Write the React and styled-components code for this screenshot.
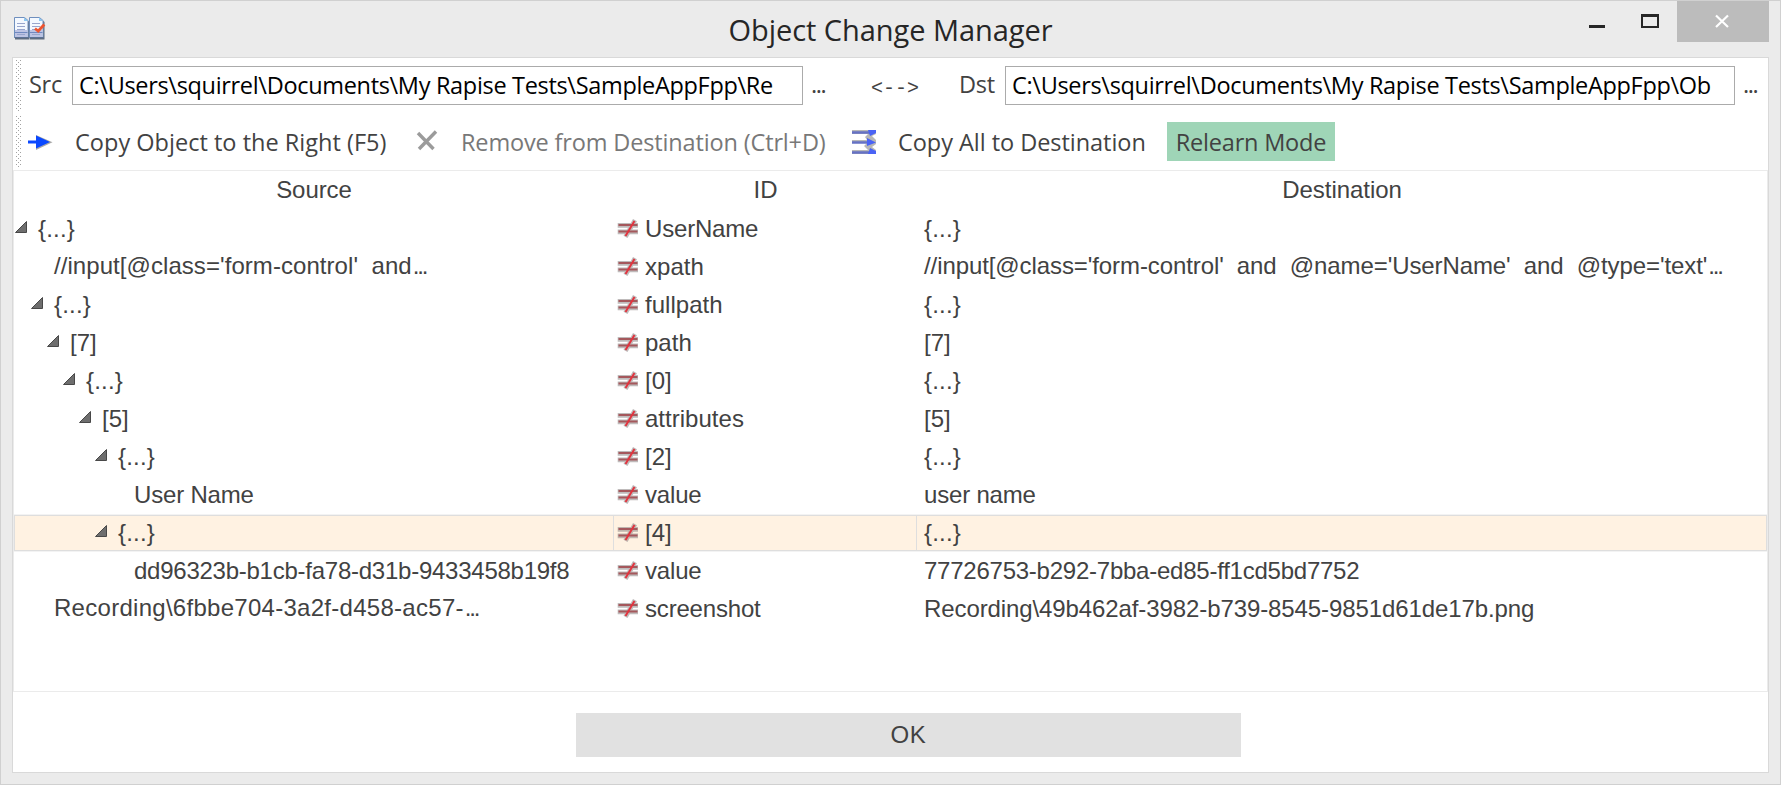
import React from 'react';
import styled, { createGlobalStyle } from 'styled-components';

const Global = createGlobalStyle`
  * { box-sizing: border-box; }
  body { margin: 0; background: #ebebeb; }
`;

const Window = styled.div`
  width: 1781px;
  height: 785px;
  display: flex;
  flex-direction: column;
  padding: 0 11px 11px;
  border: 1px solid #d0d0d0;
  background: #ebebeb;
  color: #424242;
  font-family: 'Open Sans', 'Noto Sans', sans-serif;
  font-size: 23.5px;
  white-space: pre;
`;

const TitleBar = styled.header`
  height: 56px;
  flex: none;
  display: grid;
  grid-template-columns: 280px 1fr 280px;
`;

const AppIcon = styled.svg`
  display: block;
  margin: 15px 0 0 2px;
`;

const Title = styled.h1`
  margin: 0;
  font-size: 29px;
  font-weight: 400;
  line-height: 58px;
  letter-spacing: -0.06px;
  text-align: center;
  color: #262626;
`;

const WindowButtons = styled.div`
  display: flex;
  justify-content: flex-end;
  align-items: flex-start;
`;

const WindowButton = styled.button`
  width: ${(p) => p.$width}px;
  height: 41px;
  padding: 0;
  border: 0;
  background: ${(p) => (p.$close ? '#bcbcbc' : 'transparent')};
  svg { display: block; }
`;

const Panel = styled.main`
  flex: 1;
  display: flex;
  flex-direction: column;
  border: 1px solid #d9d9d9;
  background: #fff;
`;

const Toolbar = styled.div`
  height: 56px;
  flex: none;
  display: flex;
  align-items: flex-start;
  padding: 2px 0 0 3px;
`;

const Grip = styled.svg`
  flex: none;
  width: 5px;
  height: 51px;
`;

const PathLabel = styled.label`
  width: ${(p) => p.$width}px;
  padding-top: 5px;
  padding-left: ${(p) => p.$left}px;
  line-height: 39px;
  letter-spacing: -0.3px;
`;

const PathInput = styled.div`
  width: ${(p) => p.$width}px;
  height: 39px;
  margin-top: 6px;
  padding-left: 6px;
  border: 1px solid #ababab;
  color: #000;
  line-height: 37px;
  letter-spacing: -0.32px;
  overflow: hidden;
`;

const BrowseButton = styled.button`
  width: ${(p) => p.$width}px;
  margin-top: 5px;
  padding: 0 0 0 8px;
  border: 0;
  background: none;
  color: inherit;
  font: inherit;
  text-align: left;
  line-height: 39px;
  letter-spacing: -1.4px;
`;

const SwapButton = styled(BrowseButton)`
  margin-top: 9px;
  padding-left: 7px;
  font: 20px 'Liberation Mono', monospace;
  line-height: 40px;
  letter-spacing: 0;
`;

const Command = styled.button`
  display: flex;
  width: ${(p) => p.$width}px;
  height: 39px;
  margin-top: 6px;
  padding: 0;
  border: 0;
  background: none;
  color: ${(p) => (p.$disabled ? '#787878' : 'inherit')};
  font: inherit;
  line-height: 40px;
  letter-spacing: ${(p) => p.$track || 0}px;
  svg { flex: none; }
`;

const ModeButton = styled.button`
  width: 168px;
  height: 39px;
  margin-top: 6px;
  padding: 0;
  border: 0;
  background: #9fd5b7;
  color: inherit;
  font: inherit;
  line-height: 38px;
  letter-spacing: -0.2px;
`;

const Table = styled.section`
  height: 522px;
  flex: none;
  border: 1px solid #ebebeb;
  font-family: 'Liberation Sans', Arial, sans-serif;
  font-size: 24px;
  letter-spacing: -0.2px;
`;

const HeaderRow = styled.div`
  display: grid;
  grid-template-columns: 600px 303px 1fr;
  height: 39px;
  line-height: 38px;
  text-align: center;
  letter-spacing: -0.05px;
`;

const Row = styled.div`
  display: grid;
  grid-template-columns: 600px 303px 1fr;
  height: 38px;
  ${(p) => p.$selected && `
    padding: 1px 0;
    background: #f3f3f3;
  `}
`;

const Cell = styled.div`
  display: flex;
  min-width: 0;
  line-height: ${(p) => (p.$raised ? 36 : p.$selected ? 34 : 38)}px;
  padding-left: ${(p) => p.$left - (p.$selected && p.$first ? 1 : 0)}px;
  letter-spacing: ${(p) => p.$track}px;
  ${(p) => p.$selected && `
    background: #fff2e2;
    border: 1px solid #dedede;
    border-left-width: ${p.$first ? 1 : 0}px;
  `}
`;

const Dots = styled.span`
  margin-left: 1px;
  letter-spacing: -2.2px;
`;

const Footer = styled.footer`
  flex: 1;
  display: flex;
  justify-content: flex-start;
  padding: 21px 0 0 563px;
`;

const OkButton = styled.button`
  width: 665px;
  height: 44px;
  padding: 0;
  border: 0;
  background: #e1e1e1;
  color: inherit;
  font: 24px/42px 'Liberation Sans', Arial, sans-serif;
  letter-spacing: 0.6px;
`;

const ToggleSvg = styled.svg`
  flex: none;
  margin: ${(p) => (p.$selected ? 9 : 11)}px 11px 0 0;
`;

const NotEqualSvg = styled.svg`
  flex: none;
  margin: ${(p) => (p.$selected ? 7 : 9)}px 6px 0 0;
`;

const GripDots = () => (
  <Grip shapeRendering="crispEdges">
    <defs>
      <pattern id="grip" width="4" height="4" patternUnits="userSpaceOnUse">
        <rect width="1" height="1" fill="#a2a2a2" />
        <rect x="2" y="2" width="1" height="1" fill="#a2a2a2" />
      </pattern>
    </defs>
    <rect width="5" height="51" fill="url(#grip)" />
  </Grip>
);

const Page = ({ x }) => (
  <g transform={`translate(${x} 0)`}>
    <path d="M1 1.5H11.5L15.5 5V22.5H1Z" fill="#5f6c80" />
    <path d="M.5.5H10.5L14 3.5V20.5H.5Z" fill="#f3f8ff" stroke="#6f8fbe" />
    <path d="M1 13H13.5V20H1Z" fill="#bcc3e3" />
    <path d="M10 .5V4H14Z" fill="#8cc8f2" />
    <path d="M3 6.5H11M3 9.5H11M3 12.5H11M3 17.5H11" stroke="#98a5cd" />
    <path d="M1 15.5H13.5" stroke="#7089c0" />
    <path d="M.5 20.5H14" stroke="#5c7296" />
  </g>
);

const BookIcon = () => (
  <AppIcon width="32" height="25">
    <g transform="translate(0 1)">
      <Page x={0} />
      <Page x={15} />
      <path d="M21 11.5L24.2 14L30.3 7.5" fill="none" stroke="#ee5530" strokeWidth="2.8" />
    </g>
  </AppIcon>
);

const Toggle = ({ selected }) => (
  <ToggleSvg $selected={selected} width="12" height="12">
    <path d="M.5 11.5H11.5V.5Z" fill="#6e6e6e" stroke="#484848" />
  </ToggleSvg>
);

const NotEqual = ({ selected }) => (
  <NotEqualSvg $selected={selected} width="22" height="19">
    <g opacity=".55" stroke="#8b8484">
      <path d="M.7 6.3H21M.7 12.8H21" strokeWidth="4.8" />
      <path d="M8.5 17.8L18 1.2" strokeWidth="4.6" />
    </g>
    <path d="M1.5 6H20.5M1.5 12.5H20.5" stroke="#a5585c" strokeWidth="2" />
    <path d="M8.5 17L17.5 2" stroke="#e2343f" strokeWidth="2" />
  </NotEqualSvg>
);

const rows = [
  { level: 0, open: true, source: '{...}', id: 'UserName', dest: '{...}' },
  {
    level: 1, raised: true, source: "//input[@class='form-control'  and", cut: true, track: 0.06, id: 'xpath',
    dest: "//input[@class='form-control'  and  @name='UserName'  and  @type='text'", destCut: true, destTrack: -0.09, destRaised: true,
  },
  { level: 1, open: true, source: '{...}', id: 'fullpath', dest: '{...}' },
  { level: 2, open: true, source: '[7]', id: 'path', dest: '[7]' },
  { level: 3, open: true, source: '{...}', id: '[0]', dest: '{...}' },
  { level: 4, open: true, source: '[5]', id: 'attributes', dest: '[5]' },
  { level: 5, open: true, source: '{...}', id: '[2]', dest: '{...}' },
  { level: 6, source: 'User Name', id: 'value', dest: 'user name' },
  { level: 5, open: true, source: '{...}', id: '[4]', dest: '{...}', selected: true },
  { level: 6, source: 'dd96323b-b1cb-fa78-d31b-9433458b19f8', track: -0.25, id: 'value', dest: '77726753-b292-7bba-ed85-ff1cd5bd7752', destTrack: -0.24 },
  {
    level: 1, raised: true, source: 'Recording\\6fbbe704-3a2f-d458-ac57-', cut: true, track: 0.28, id: 'screenshot',
    dest: 'Recording\\49b462af-3982-b739-8545-9851d61de17b.png', destTrack: -0.1,
  },
];

const textTrack = (text) => (text[0] === '{' ? 0.2 : text[0] === '[' ? 0 : -0.18);

const TreeRow = ({ row }) => {
  const sel = row.selected;
  return (
    <Row $selected={sel}>
      <Cell
        $first
        $selected={sel}
        $raised={row.raised}
        $left={row.open ? 1 + row.level * 16 : 24 + row.level * 16}
        $track={row.track ?? textTrack(row.source)}
      >
        {row.open && <Toggle selected={sel} />}
        <span>{row.source}</span>
        {row.cut && <Dots>...</Dots>}
      </Cell>
      <Cell $selected={sel} $left={3} $track={row.id.endsWith('path') || row.id === 'attributes' ? 0.02 : textTrack(row.id)}>
        <NotEqual selected={sel} />
        <span>{row.id}</span>
      </Cell>
      <Cell $selected={sel} $raised={row.destRaised} $left={7} $track={row.destTrack ?? textTrack(row.dest)}>
        <span>{row.dest}</span>
        {row.destCut && <Dots>...</Dots>}
      </Cell>
    </Row>
  );
};

export default function App() {
  return (
    <Window>
      <Global />
      <TitleBar>
        <BookIcon />
        <Title>Object Change Manager</Title>
        <WindowButtons>
          <WindowButton $width={52} aria-label="Minimize">
            <svg width="52" height="41"><rect x="18" y="24" width="16" height="3" fill="#262626" /></svg>
          </WindowButton>
          <WindowButton $width={54} aria-label="Maximize">
            <svg width="54" height="41">
              <path d="M18 13H36V27H18ZM20 16V25H34V16Z" fill="#262626" fillRule="evenodd" />
            </svg>
          </WindowButton>
          <WindowButton $width={92} $close aria-label="Close">
            <svg width="92" height="41">
              <path d="M39 14.5L51 26M51 14.5L39 26" stroke="#fff" strokeWidth="2.2" />
            </svg>
          </WindowButton>
        </WindowButtons>
      </TitleBar>
      <Panel>
        <Toolbar>
          <GripDots />
          <PathLabel $width={51} $left={8}>Src</PathLabel>
          <PathInput $width={731}>{'C:\\Users\\squirrel\\Documents\\My Rapise Tests\\SampleAppFpp\\Re'}</PathInput>
          <BrowseButton $width={61}>...</BrowseButton>
          <SwapButton $width={86}>{'<-->'}</SwapButton>
          <PathLabel $width={55} $left={9}>Dst</PathLabel>
          <PathInput $width={730}>{'C:\\Users\\squirrel\\Documents\\My Rapise Tests\\SampleAppFpp\\Ob'}</PathInput>
          <BrowseButton $width={30}>...</BrowseButton>
        </Toolbar>
        <Toolbar>
          <GripDots />
          <Command $width={394} $track={0.02}>
            <svg width="54" height="39">
              <path d="M15 13L31.5 20.2L15 28Z" fill="#a8a8a8" />
              <path d="M7 18.5H15V13.5L29 20L15 26.5V21.5H7Z" fill="#0a48ff" />
            </svg>
            Copy Object to the Right (F5)
          </Command>
          <Command $width={433} $disabled $track={-0.15}>
            <svg width="46" height="39">
              <path d="M3 11L18.5 27M21 9.5L4 27" stroke="#9b9b9b" strokeWidth="3.4" />
            </svg>
            Remove from Destination (Ctrl+D)
          </Command>
          <Command $width={319} $track={-0.04}>
            <svg width="50" height="39">
              <path d="M4 8H28V12L24 14L28 18V22L24 25L28 28V32H4V28H20L16 24L19 21H4V18H19L17 15L20 12H4Z" fill="#b7b7b7" />
              <path d="M4 10.5H22M4 20.5H22M4 30.5H22" stroke="#6672c4" strokeWidth="2.6" />
              <path d="M20 8H28V11L22 14ZM19 16L28 20.5L19 24ZM20 32H28V29L22 26Z" fill="#4a63f5" />
            </svg>
            Copy All to Destination
          </Command>
          <ModeButton>Relearn Mode</ModeButton>
        </Toolbar>
        <Table>
          <HeaderRow>
            <span>Source</span>
            <span>ID</span>
            <span>Destination</span>
          </HeaderRow>
          {rows.map((row, i) => <TreeRow key={i} row={row} />)}
        </Table>
        <Footer>
          <OkButton>OK</OkButton>
        </Footer>
      </Panel>
    </Window>
  );
}
